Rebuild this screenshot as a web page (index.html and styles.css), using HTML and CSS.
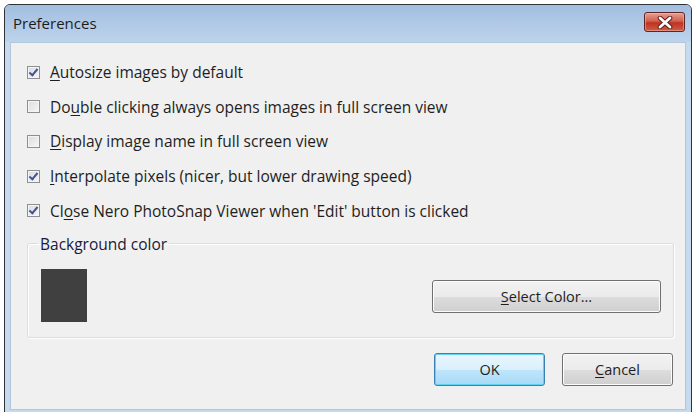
FILE: index.html
```html
<!DOCTYPE html>
<html>
<head>
    <title>Preferences</title>
    <link rel="stylesheet" href="styles.css">
</head>
<body>
    <div class="window">
        <div class="titlebar">
            <span class="title">Preferences</span>
            <button class="close" type="button" title="Close">
                <svg width="16" height="13" viewBox="0 0 16 13">
                    <path d="M3 2 L13 11 M13 2 L3 11" stroke="#5a1a14" stroke-width="4.6" stroke-linecap="round"/>
                    <path d="M3 2 L13 11 M13 2 L3 11" stroke="#ffffff" stroke-width="2.8" stroke-linecap="round"/>
                </svg>
            </button>
        </div>

        <div class="content">
            <label class="option"><span class="check on"></span><span><u>A</u>utosize images by default</span></label>
            <label class="option"><span class="check"></span><span>Do<u>u</u>ble clicking always opens images in full screen view</span></label>
            <label class="option"><span class="check"></span><span><u>D</u>isplay image name in full screen view</span></label>
            <label class="option"><span class="check on"></span><span><u>I</u>nterpolate pixels (nicer, but lower drawing speed)</span></label>
            <label class="option"><span class="check on"></span><span>Cl<u>o</u>se Nero PhotoSnap Viewer when 'Edit' button is clicked</span></label>

            <fieldset class="group">
                <legend>Background color</legend>
                <div class="group-body">
                    <div class="swatch"></div>
                    <button class="btn select" type="button"><u>S</u>elect Color...</button>
                </div>
            </fieldset>

            <div class="actions">
                <button class="btn default" type="button">OK</button>
                <button class="btn" type="button"><u>C</u>ancel</button>
            </div>
        </div>
    </div>
</body>
</html>
```

FILE: styles.css
```css
body {
    margin: 0;
    background: #ffffff;
    font-family: "Open Sans", "Noto Sans", sans-serif;
    font-size: 15.5px;
    color: #1e1e1e;
}

.window {
    margin: 4px 0 0 4px;
    width: 676px;
    height: 405px;
    border: 1px solid #2f3338;
    border-radius: 6px 6px 0 0;
    background: #c6daee;
    display: flex;
    flex-direction: column;
    padding: 0 5px 4px 5px;
    box-shadow: inset 0 -2px 0 #4d8fbe;
}

.titlebar {
    height: 37px;
    margin: 0 -5px;
    padding: 0 6px 0 8px;
    background: linear-gradient(#a2bedf, #b3cbe7 60%, #bcd3ec);
    border-radius: 5px 5px 0 0;
    display: flex;
    align-items: center;
    justify-content: space-between;
}

.title {
    font-size: 15px;
    color: #1c1c1c;
    margin-top: -2px;
}

.close {
    width: 41px;
    height: 20px;
    margin-top: -3px;
    padding: 0;
    border: 1px solid #5e2421;
    border-radius: 3px;
    background: linear-gradient(#e6a093, #d0604e 45%, #bd3322 55%, #d05d45);
    box-shadow: inset 0 0 0 1px rgba(255, 200, 190, 0.45);
    display: flex;
    align-items: center;
    justify-content: center;
}

.content {
    flex: 1;
    background: #f0f0f0;
    border: 1px solid #b4c6da;
    padding: 12px 16px 0 16px;
    display: flex;
    flex-direction: column;
}

.option {
    height: 34.6px;
    display: flex;
    align-items: center;
    gap: 10px;
}

u {
    text-decoration-thickness: 1px;
    text-underline-offset: 2px;
}

.check {
    width: 11px;
    height: 11px;
    border: 1px solid #8f8f8f;
    background: linear-gradient(135deg, #dcdcdc, #f6f6f6);
    box-shadow: inset 0 0 0 1px #f4f4f4;
    position: relative;
    flex: none;
}

.check.on::after {
    content: "";
    position: absolute;
    left: 3px;
    top: 0px;
    width: 3px;
    height: 7px;
    border: solid #40549c;
    border-width: 0 2px 2px 0;
    transform: rotate(40deg);
}

.group {
    margin: 5px 0 0 0;
    padding: 0 12px 15px 13px;
    border: 1px solid #d5dfe5;
    border-radius: 3px;
    box-shadow: 1px 1px 0 #ffffff, inset 1px 1px 0 #ffffff;
    width: 620px;
}

.group legend {
    padding: 0 2px;
    margin-left: -3px;
    color: #1a1a3a;
}

.group-body {
    display: flex;
    justify-content: space-between;
    align-items: flex-start;
    padding-top: 14px;
}

.swatch {
    width: 46px;
    height: 53px;
    background: #404040;
}

.btn {
    font-family: inherit;
    font-size: 14.5px;
    color: #1e1e1e;
    height: 33px;
    width: 111px;
    border: 1px solid #707070;
    border-radius: 3px;
    background: linear-gradient(#f2f2f2, #ebebeb 50%, #dddddd 51%, #cfcfcf);
    box-shadow: inset 0 0 0 1px #fcfcfc;
    padding: 0;
}

.btn.select {
    width: 229px;
    margin-top: 11px;
}

.btn.default {
    border-color: #3c7fb1;
    background: linear-gradient(#eaf6fd, #d9f0fc 50%, #bee6fd 51%, #a7d9f5);
    box-shadow: inset 0 0 0 1px #63d3f2;
}

.actions {
    display: flex;
    justify-content: flex-end;
    gap: 17px;
    margin-top: 15px;
    width: 646px;
}
```
